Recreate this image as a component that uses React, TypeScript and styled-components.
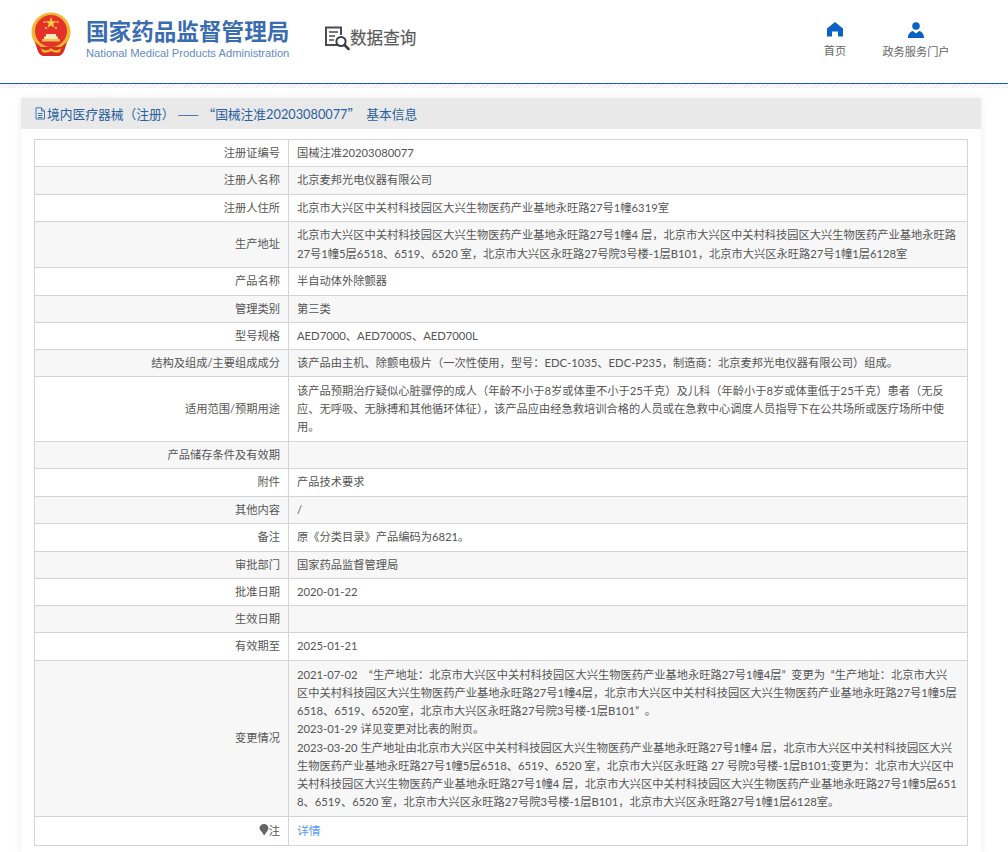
import React from "react";
import styled, { createGlobalStyle } from "styled-components";

const GlobalStyle = createGlobalStyle`
  html, body { margin: 0; padding: 0; background: #fff; }
  body {
    font-family: Lato, "Noto Sans CJK SC", sans-serif;
    font-size: 11.25px;
    color: #555;
  }
`;

const Page = styled.div`
  width: 1008px;
  height: 852px;
  overflow: hidden;
`;

const Header = styled.header`
  height: 84px;
  box-sizing: border-box;
  border-bottom: 1px solid #1560b4;
  display: flex;
  align-items: flex-start;
  padding: 12px 0 0 30px;
`;

const Brand = styled.div`
  display: flex;
  align-items: flex-start;
`;

const BrandText = styled.div`
  margin: 6px 0 0 14px;
  width: 206px;
`;

const BrandName = styled.div`
  font-family: "Noto Sans CJK SC", sans-serif;
  font-size: 22.6px;
  line-height: 26px;
  font-weight: 700;
  color: #3a6cb0;
  white-space: nowrap;
`;

const BrandEn = styled.div`
  font-family: "Liberation Sans", sans-serif;
  font-size: 11.2px;
  line-height: 14px;
  margin-top: 2px;
  color: #5f8bc6;
  white-space: nowrap;
`;

const Query = styled.div`
  display: flex;
  align-items: flex-start;
  margin: 14px 0 0 32px;
`;

const QueryText = styled.div`
  font-size: 16.6px;
  line-height: 24px;
  color: #5a5a5a;
  -webkit-text-stroke: 0.2px #5a5a5a;
  white-space: nowrap;
`;

const Nav = styled.nav`
  margin-left: auto;
  display: flex;
  margin-top: 10px;
  padding-right: 58px;
  gap: 32px;
`;

const NavItem = styled.a<{ $w: number }>`
  display: flex;
  flex-direction: column;
  align-items: center;
  width: ${(p) => p.$w}px;
  color: #666;
  font-size: 11.2px;
  line-height: 14px;
  svg { display: block; margin-bottom: 7px; }
`;

const Hatch = styled.div`
  height: 4px;
  background: repeating-linear-gradient(135deg, #ececec 0 1px, #fbfbfb 1px 3px);
`;

const Panel = styled.section`
  margin: 10px 27px 0 21px;
  background: #fff;
  box-shadow: 0 0 8px rgba(0, 0, 0, 0.08);
  padding-bottom: 12px;
`;

const PanelHead = styled.div`
  height: 31px;
  background: #e9e9e9;
  display: flex;
  align-items: center;
  padding-left: 13px;
  color: #2a5f9e;
  font-size: 12.75px;
  white-space: pre;
  svg { margin-right: 1px; }
`;

const Cjk = styled.span`
  font-family: "Noto Sans CJK SC", sans-serif;
`;

const Dash = styled(Cjk)`
  margin: 0 0 0 3px;
  letter-spacing: 1.5px;
`;

const OpenQuote = styled(Cjk)`
  margin-left: 2px;
`;

const CloseQuote = styled(Cjk)`
  margin-right: 6px;
`;

const Table = styled.table`
  margin: 10px 13px 0;
  width: 934px;
  border-collapse: collapse;
  table-layout: fixed;
  border: 1px solid #cfcfcf;
`;

const Row = styled.tr<{ $odd: boolean; $h: number }>`
  height: ${(p) => p.$h}px;
  background: ${(p) => (p.$odd ? "#f7f7f7" : "#fff")};
`;

const Label = styled.td`
  width: 254px;
  box-sizing: border-box;
  padding: 0 8px 0 0;
  text-align: right;
  border: 1px solid #d4d4d4;
  line-height: 18.2px;
`;

const Value = styled.td`
  padding: 0 9.5px 0 8px;
  border: 1px solid #d4d4d4;
  line-height: 18.2px;
  word-break: break-all;
`;

const DetailLink = styled.a`
  color: #5b9bf0;
  font-size: 11.8px;
`;

const Emblem = () => (
  <svg width="42" height="46" viewBox="0 0 42 46">
    <circle cx="21" cy="20" r="19.5" fill="#f2b632" />
    <circle cx="21" cy="19" r="16" fill="#e4322a" />
    <polygon points="21,5 22.4,9.2 26.8,9.2 23.2,11.8 24.6,16 21,13.4 17.4,16 18.8,11.8 15.2,9.2 19.6,9.2" fill="#f6cf3c" />
    <circle cx="14.5" cy="10" r="1.1" fill="#f6cf3c" />
    <circle cx="27.5" cy="10" r="1.1" fill="#f6cf3c" />
    <circle cx="16" cy="16" r="1.1" fill="#f6cf3c" />
    <circle cx="26" cy="16" r="1.1" fill="#f6cf3c" />
    <path d="M14 27h14v-2l-2-1v-2h-10v2l-2 1z" fill="#f8e9c0" />
    <rect x="12" y="27" width="18" height="2.5" fill="#f3c34a" />
    <path d="M5 30c2 6 3 13 8 14h16c5-1 6-8 8-14l-6 5H11z" fill="#d92c24" />
    <path d="M11 36c3 3 7 3 10 0 3 3 7 3 10 0l-1 4c-3 1-6 1-9-1-3 2-6 2-9 1z" fill="#f2b632" />
  </svg>
);

const QueryIcon = () => (
  <svg width="26" height="26" viewBox="0 0 26 26" fill="none">
    <path d="M15 19H2V1.5h15V9" stroke="#4a4a52" strokeWidth="2" />
    <path d="M5 6h9M5 10h6M5 14h5" stroke="#4a4a52" strokeWidth="1.6" />
    <circle cx="17" cy="15.5" r="4.6" stroke="#3c3c44" strokeWidth="2" />
    <path d="M20.5 19l4 4" stroke="#3c3c44" strokeWidth="2.6" strokeLinecap="round" />
  </svg>
);

const HomeIcon = () => (
  <svg width="16" height="15" viewBox="0 0 16 15">
    <path d="M8 0L16 6.5V14.5H11V9.5H5V14.5H0V6.5z" fill="#0b62c4" />
  </svg>
);

const UserIcon = () => (
  <svg width="16" height="16" viewBox="0 0 16 16">
    <circle cx="8" cy="4" r="3.8" fill="#0b62c4" />
    <path d="M0 16c0-4 2-6.5 5-7l3 2.5 3-2.5c3 .5 5 3 5 7z" fill="#0b62c4" />
  </svg>
);

const DocIcon = () => (
  <svg width="12" height="13" viewBox="0 0 12 13" fill="none" stroke="#3f74b8" strokeWidth="1">
    <path d="M2 .8h5.5L10.5 4v8H2z" />
    <path d="M7.5.8V4h3M4 6.5h4.5M4 8.5h4.5M4 10.5h4.5" />
  </svg>
);

const BulbIcon = () => (
  <svg width="10" height="11" viewBox="0 0 9 11">
    <path d="M4.5 0C7 0 9 1.8 9 4.2 9 6.5 6.5 8 5.2 11H4.2C3.8 8.5 0 6.5 0 4.2 0 1.8 2 0 4.5 0z" fill="#666" />
  </svg>
);

const rows: { label: React.ReactNode; h: number; value: React.ReactNode }[] = [
  { label: "注册证编号", h: 27, value: "国械注准20203080077" },
  { label: "注册人名称", h: 28, value: "北京麦邦光电仪器有限公司" },
  { label: "注册人住所", h: 27, value: "北京市大兴区中关村科技园区大兴生物医药产业基地永旺路27号1幢6319室" },
  { label: "生产地址", h: 46, value: "北京市大兴区中关村科技园区大兴生物医药产业基地永旺路27号1幢4 层，北京市大兴区中关村科技园区大兴生物医药产业基地永旺路27号1幢5层6518、6519、6520 室，北京市大兴区永旺路27号院3号楼-1层B101，北京市大兴区永旺路27号1幢1层6128室" },
  { label: "产品名称", h: 28, value: "半自动体外除颤器" },
  { label: "管理类别", h: 27, value: "第三类" },
  { label: "型号规格", h: 27, value: "AED7000、AED7000S、AED7000L" },
  { label: "结构及组成/主要组成成分", h: 27, value: "该产品由主机、除颤电极片（一次性使用，型号：EDC-1035、EDC-P235，制造商：北京麦邦光电仪器有限公司）组成。" },
  { label: "适用范围/预期用途", h: 65, value: "该产品预期治疗疑似心脏骤停的成人（年龄不小于8岁或体重不小于25千克）及儿科（年龄小于8岁或体重低于25千克）患者（无反应、无呼吸、无脉搏和其他循环体征），该产品应由经急救培训合格的人员或在急救中心调度人员指导下在公共场所或医疗场所中使用。" },
  { label: "产品储存条件及有效期", h: 27, value: "" },
  { label: "附件", h: 28, value: "产品技术要求" },
  { label: "其他内容", h: 27, value: "/" },
  { label: "备注", h: 28, value: "原《分类目录》产品编码为6821。" },
  { label: "审批部门", h: 27, value: "国家药品监督管理局" },
  { label: "批准日期", h: 27, value: "2020-01-22" },
  { label: "生效日期", h: 27, value: "" },
  { label: "有效期至", h: 28, value: "2025-01-21" },
  {
    label: "变更情况",
    h: 156,
    value: (
      <>
        {"2021-07-02\u2002\u2002“生产地址：北京市大兴区中关村科技园区大兴生物医药产业基地永旺路27号1幢4层”\u2002变更为\u2002“生产地址：北京市大兴区中关村科技园区大兴生物医药产业基地永旺路27号1幢4层，北京市大兴区中关村科技园区大兴生物医药产业基地永旺路27号1幢5层6518、6519、6520室，北京市大兴区永旺路27号院3号楼-1层B101”\u2002。"}
        <br />
        2023-01-29 详见变更对比表的附页。
        <br />
        2023-03-20 生产地址由北京市大兴区中关村科技园区大兴生物医药产业基地永旺路27号1幢4 层，北京市大兴区中关村科技园区大兴生物医药产业基地永旺路27号1幢5层6518、6519、6520 室，北京市大兴区永旺路 27 号院3号楼-1层B101;变更为：北京市大兴区中关村科技园区大兴生物医药产业基地永旺路27号1幢4 层，北京市大兴区中关村科技园区大兴生物医药产业基地永旺路27号1幢5层6518、6519、6520 室，北京市大兴区永旺路27号院3号楼-1层B101，北京市大兴区永旺路27号1幢1层6128室。
      </>
    ),
  },
  { label: <><BulbIcon />注</>, h: 29, value: <DetailLink>详情</DetailLink> },
];

export default function App() {
  return (
    <Page>
      <GlobalStyle />
      <Header>
        <Brand>
          <Emblem />
          <BrandText>
            <BrandName>国家药品监督管理局</BrandName>
            <BrandEn>National Medical Products Administration</BrandEn>
          </BrandText>
        </Brand>
        <Query>
          <QueryIcon />
          <QueryText>数据查询</QueryText>
        </Query>
        <Nav>
          <NavItem $w={30}>
            <HomeIcon />
            首页
          </NavItem>
          <NavItem $w={68}>
            <UserIcon />
            政务服务门户
          </NavItem>
        </Nav>
      </Header>
      <Hatch />
      <Panel>
        <PanelHead>
          <DocIcon />
          境内医疗器械（注册）<Dash>——</Dash><OpenQuote>“</OpenQuote>国械注准20203080077<CloseQuote>”</CloseQuote>基本信息
        </PanelHead>
        <Table>
          <tbody>
            {rows.map((r, i) => (
              <Row key={i} $odd={i % 2 === 1} $h={r.h}>
                <Label>{r.label}</Label>
                <Value>{r.value}</Value>
              </Row>
            ))}
          </tbody>
        </Table>
      </Panel>
    </Page>
  );
}
